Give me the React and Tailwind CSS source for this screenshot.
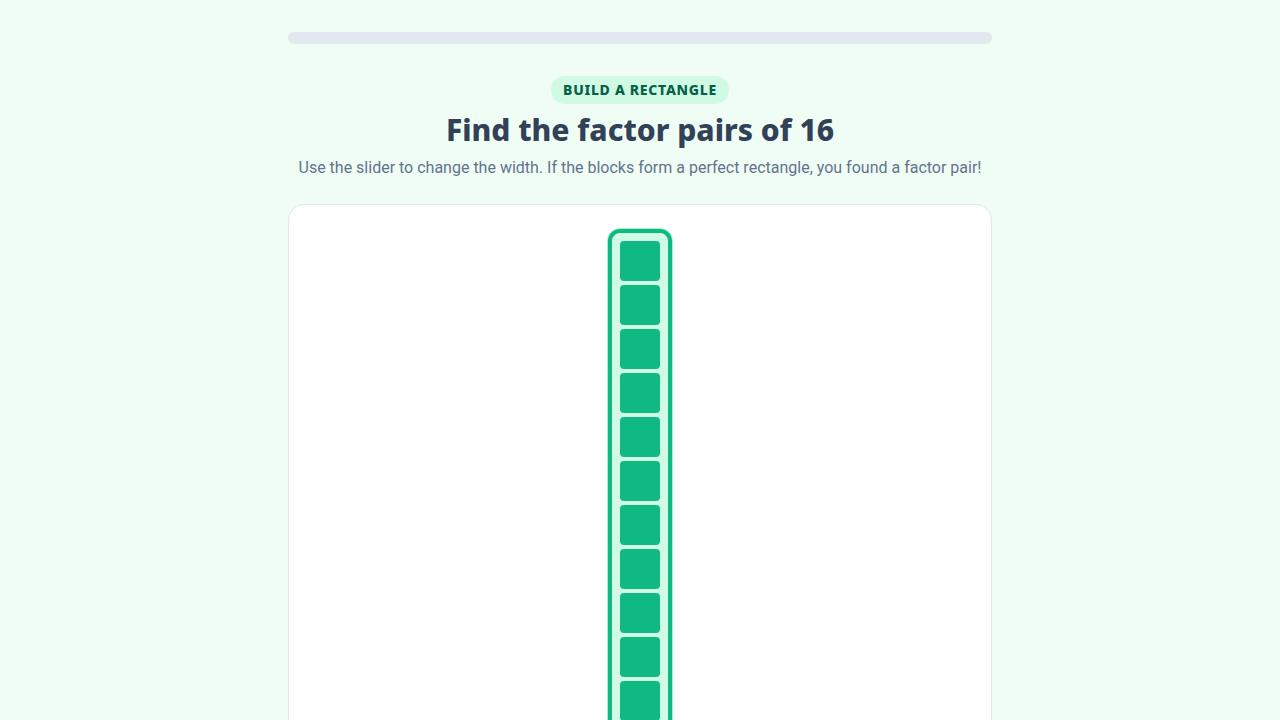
import React from 'react';

const TARGET = 16;

function ProgressBar({ value }) {
    return (
        <div className="h-3 w-full rounded-full bg-slate-200 overflow-hidden mb-8">
            <div className="h-full rounded-full bg-[#10b981]" style={{ width: `${value}%` }} />
        </div>
    );
}

function BlockGrid({ total, columns }) {
    const perfect = total % columns === 0;

    return (
        <div
            className={
                perfect
                    ? 'grid gap-1 p-2 rounded-xl border-4 border-[#10b981] bg-[#d1fae5] ring-1 ring-[#a7f3d0]'
                    : 'grid gap-1 p-2 rounded-xl border-4 border-slate-300 bg-slate-50'
            }
            style={{ gridTemplateColumns: `repeat(${columns}, 40px)` }}
        >
            {Array.from({ length: total }, (_, i) => (
                <div key={i} className="size-10 rounded-sm bg-[#10b981]" />
            ))}
        </div>
    );
}

export default function App() {
    return (
        <div className="min-h-screen bg-[#f0fdf4] font-['Noto_Sans',sans-serif]">
            <main className="max-w-3xl mx-auto p-8">
                <ProgressBar value={0} />

                <header className="flex flex-col items-center text-center gap-2 mb-6">
                    <span className="rounded-full bg-[#d1fae5] px-3 py-1 text-sm font-extrabold uppercase tracking-wider text-[#065f46]">
                        Build a rectangle
                    </span>
                    <h1 className="text-3xl font-extrabold text-slate-700">Find the factor pairs of {TARGET}</h1>
                    <p className="font-['Roboto',sans-serif] text-base text-slate-500">
                        Use the slider to change the width. If the blocks form a perfect rectangle, you found a factor pair!
                    </p>
                </header>

                <section className="flex flex-col items-center rounded-2xl border border-slate-200 bg-white p-6">
                    <BlockGrid total={TARGET} columns={1} />
                </section>
            </main>
        </div>
    );
}
